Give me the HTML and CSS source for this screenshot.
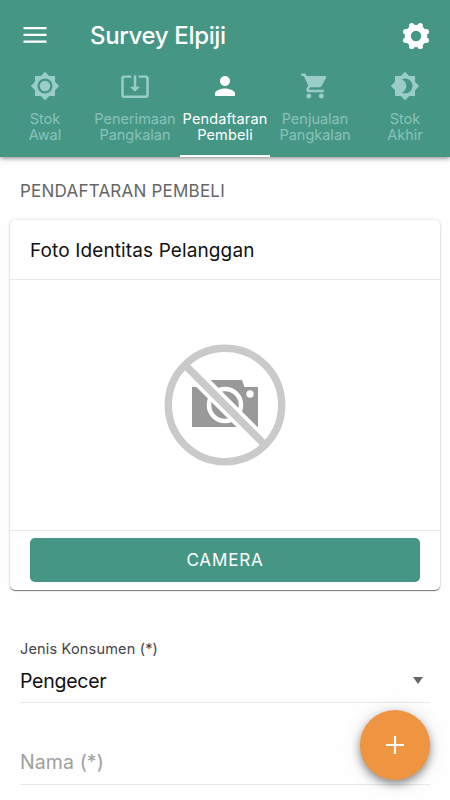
FILE: index.html
```html
<!DOCTYPE html>
<html lang="id">
<head>
<meta charset="utf-8">
<title>Survey Elpiji</title>
<link rel="stylesheet" href="styles.css">
</head>
<body>
<header class="header">
  <div class="toolbar">
    <button class="menu" aria-label="Menu"><svg width="24" height="16" viewBox="0 0 24 16"><path d="M.5 0h23v2.300H.5zM.5 6.700h23v2.300H.5zM.5 13.400h23v2.300H.5z"/></svg></button>
    <h1 class="title">Survey Elpiji</h1>
    <button class="settings" aria-label="Settings"><svg width="26" height="26" viewBox="-13 -13 26 26"><circle r="8.2" fill="none" stroke="currentColor" stroke-width="6"/><g><circle cx="4.3" cy="-10.4" r="2.6"/><circle cx="-4.3" cy="-10.4" r="2.6"/><circle cx="4.3" cy="10.4" r="2.6"/><circle cx="-4.3" cy="10.4" r="2.6"/><circle cx="10.4" cy="4.3" r="2.6"/><circle cx="10.4" cy="-4.3" r="2.6"/><circle cx="-10.4" cy="4.3" r="2.6"/><circle cx="-10.4" cy="-4.3" r="2.6"/></g></svg></button>
  </div>
  <nav class="tabs">
    <a class="tab"><svg class="icon" viewBox="0 0 24 24"><path d="M20 15.31L23.31 12 20 8.69V4h-4.69L12 .69 8.69 4H4v4.69L.69 12 4 15.31V20h4.69L12 23.31 15.31 20H20v-4.69zM12 18c-3.31 0-6-2.69-6-6s2.69-6 6-6 6 2.69 6 6-2.69 6-6 6z"/><circle cx="12" cy="12" r="4.2"/></svg><span>Stok<br>Awal</span></a>
    <a class="tab"><svg class="icon" viewBox="0 0 24 24"><path d="M12 16.5l4-4h-3v-9h-2v9H8l4 4zm9-13h-6v1.99h6v14.03H3V5.49h6V3.5H3c-1.1 0-2 .9-2 2v14c0 1.1.9 2 2 2h18c1.1 0 2-.9 2-2v-14c0-1.1-.9-2-2-2z"/></svg><span>Penerimaan<br>Pangkalan</span></a>
    <a class="tab active"><svg class="icon" viewBox="0 0 24 24"><path d="M12 12c2.21 0 4-1.79 4-4s-1.79-4-4-4-4 1.79-4 4 1.79 4 4 4zm0 2c-2.67 0-8 1.34-8 4v2h16v-2c0-2.66-5.33-4-8-4z"/></svg><span>Pendaftaran<br>Pembeli</span></a>
    <a class="tab"><svg class="icon" viewBox="0 0 24 24"><path d="M7 18c-1.1 0-1.99.9-1.99 2S5.9 22 7 22s2-.9 2-2-.9-2-2-2zM1 2v2h2l3.6 7.59-1.35 2.45c-.16.28-.25.61-.25.96 0 1.1.9 2 2 2h12v-2H7.42c-.14 0-.25-.11-.25-.25l.03-.12.9-1.63h7.45c.75 0 1.41-.41 1.75-1.03l3.58-6.49A1 1 0 0 0 20 4H5.21l-.94-2H1zm16 16c-1.1 0-1.99.9-1.99 2s.89 2 1.99 2 2-.9 2-2-.9-2-2-2z"/></svg><span>Penjualan<br>Pangkalan</span></a>
    <a class="tab"><svg class="icon" viewBox="0 0 24 24"><path d="M20 8.69V4h-4.69L12 .69 8.69 4H4v4.69L.69 12 4 15.31V20h4.69L12 23.31 15.31 20H20v-4.69L23.31 12 20 8.69zM12 18c-.89 0-1.74-.2-2.5-.55C11.56 16.5 13 14.42 13 12s-1.44-4.5-3.5-5.45C10.26 6.2 11.11 6 12 6c3.31 0 6 2.69 6 6s-2.69 6-6 6z"/></svg><span>Stok<br>Akhir</span></a>
  </nav>
</header>
<main class="content">
  <h2 class="section">PENDAFTARAN PEMBELI</h2>
  <section class="card">
    <h3 class="card-title">Foto Identitas Pelanggan</h3>
    <div class="photo">
      <svg width="122" height="122" viewBox="0 0 122 122">
        <path fill="#999" d="M28 43H46V36H78L80.500 43H94V83H28z"/>
        <circle cx="61" cy="61" r="16" fill="none" stroke="#fff" stroke-width="4.500"/>
        <circle cx="86" cy="50" r="3.700" fill="#fff"/>
        <path d="M20 20L102 102" stroke="#fff" stroke-width="15"/>
        <path d="M21 21L101 101" stroke="#cacaca" stroke-width="7.500"/>
        <circle cx="61" cy="61" r="56.700" fill="none" stroke="#cacaca" stroke-width="7.400"/>
      </svg>
    </div>
    <div class="card-footer"><button class="camera">CAMERA</button></div>
  </section>
  <div class="field select">
    <label class="label">Jenis Konsumen (*)</label>
    <div class="value"><span>Pengecer</span><i class="arrow"></i></div>
  </div>
  <div class="field name"><span>Nama (*)</span></div>
</main>
<button class="fab" aria-label="Tambah"><svg width="18" height="18" viewBox="0 0 18 18"><path d="M7.900 0h2.200v7.900H18v2.200h-7.900V18H7.900v-7.900H0V7.900h7.900z"/></svg></button>
</body>
</html>
```
FILE: styles.css
```css
* { box-sizing: border-box; }
body {
  margin: 0;
  height: 800px;
  overflow: hidden;
  background: #fefefe;
  color: #111;
  font-family: Inter, "Liberation Sans", sans-serif;
}
button { border: 0; padding: 0; background: none; color: inherit; font: inherit; }
svg { display: block; fill: currentColor; }
h1, h2, h3 { margin: 0; font-weight: 400; }
.header {
  height: 157px;
  background: #469686;
  color: #fff;
  box-shadow: 0 1px 5px rgba(0, 0, 0, .5);
}
.toolbar {
  display: flex;
  align-items: center;
  height: 71px;
  padding: 0 21px 0 23px;
}
.menu { margin-top: -1px; }
.title { flex: 1; margin-left: 43px; font-size: 24px; font-weight: 500; line-height: 30px; letter-spacing: -.35px; }
.settings svg { overflow: hidden; }
.tabs { display: grid; grid-template-columns: repeat(5, 1fr); height: 86px; }
.tab {
  display: flex;
  flex-direction: column;
  align-items: center;
  border-bottom: 2px solid transparent;
  color: #89c2b8;
  font-size: 14.500px;
  line-height: 16px;
  letter-spacing: 0;
  text-align: center;
  white-space: nowrap;
}
.tab.active { color: #fff; border-color: #fff; letter-spacing: .15px; }
.icon { width: 30px; height: 30px; margin-bottom: 10px; color: #9acdc7; }
.active .icon { color: #fff; }
.section { padding: 23px 20px 0; height: 63px; font-size: 17px; line-height: 22px; letter-spacing: .22px; color: #666; }
.card {
  height: 370px;
  margin: 0 10px;
  border-radius: 5px;
  background: #fff;
  box-shadow: 0 1px 1px rgba(0, 0, 0, .5), 0 0 3px rgba(0, 0, 0, .15);
}
.card-title { height: 60px; padding: 0 20px; border-bottom: 1px solid #e8e8e8; font-size: 19px; line-height: 62px; letter-spacing: .12px; }
.photo { display: grid; place-items: center; height: 250px; }
.card-footer { height: 60px; padding: 7px 20px; border-top: 1px solid #e8e8e8; }
.camera {
  display: block;
  width: 100%;
  height: 44px;
  border-radius: 5px;
  background: #469686;
  color: #fff;
  font-size: 17px;
  letter-spacing: .85px;
}
.field { margin: 0 20px; border-bottom: 1px solid #e8e8e8; }
.select { height: 113px; padding-top: 49px; }
.label { display: block; height: 20px; font-size: 14.500px; line-height: 20px; letter-spacing: .18px; color: #444; }
.value { display: flex; align-items: center; justify-content: space-between; height: 43px; padding-right: 7px; font-size: 19.500px; letter-spacing: -.25px; }
.arrow { border: 5px solid transparent; border-top: 7px solid #666; border-bottom: 0; }
.name { height: 82px; padding-top: 47px; font-size: 19.500px; line-height: 25px; letter-spacing: .1px; color: #a0a0a0; }
.fab {
  position: absolute;
  left: 360px;
  top: 710px;
  display: grid;
  place-items: center;
  width: 70px;
  height: 70px;
  border-radius: 50%;
  background: #ef9440;
  color: #fff;
  box-shadow: 0 4px 8px rgba(0, 0, 0, .4), 0 2px 20px rgba(0, 0, 0, .12);
}
```
